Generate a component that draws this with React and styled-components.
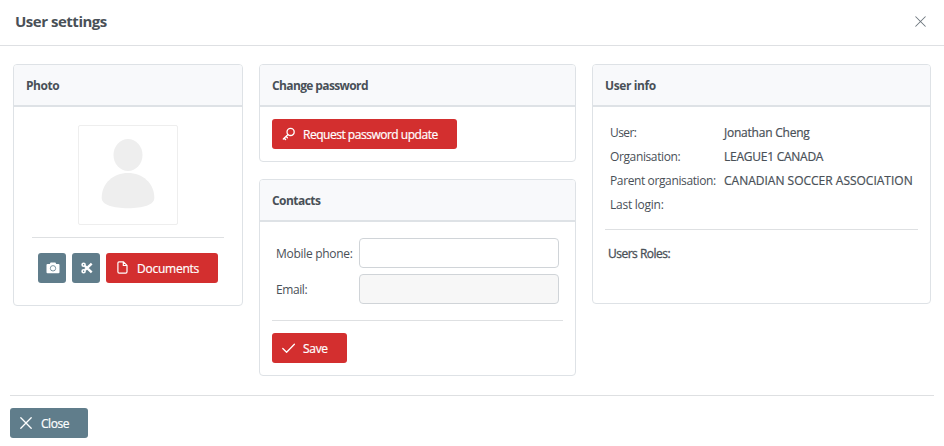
import React from "react";
import styled, { createGlobalStyle } from "styled-components";

const Global = createGlobalStyle`
  *, *::before, *::after { box-sizing: border-box; }
  body {
    margin: 0;
    background: #fff;
    color: #495057;
    font-family: "Open Sans", "Noto Sans", sans-serif;
    font-size: 12px;
    line-height: 17px;
    overflow: hidden;
  }
`;

const Dialog = styled.div`
  width: 944px;
  height: 446px;
  display: flex;
  flex-direction: column;
  background: #fff;
`;

const TitleBar = styled.header`
  height: 46px;
  flex: none;
  display: flex;
  align-items: center;
  justify-content: space-between;
  padding: 0 18px 3px 15px;
  border-bottom: 1px solid #dee0e3;
`;

const Title = styled.h1`
  margin: 0;
  font-size: 15px;
  line-height: 20px;
  font-weight: 700;
  letter-spacing: -0.48px;
`;

const IconButton = styled.button`
  display: flex;
  padding: 0;
  border: 0;
  background: none;
  color: #6c757d;
`;

const Columns = styled.main`
  flex: none;
  height: 349px;
  padding: 18px 13px 0;
  display: grid;
  grid-template-columns: 230px 317px 339px;
  column-gap: 16px;
  align-items: start;
`;

const Stack = styled.div`
  display: grid;
  row-gap: 17px;
`;

const Card = styled.section`
  height: ${(p) => p.$height}px;
  border: 1px solid #dee2e6;
  border-radius: 4px;
  overflow: hidden;
`;

const CardHead = styled.h2`
  margin: 0;
  height: 42px;
  padding: 0 12px;
  border-bottom: 2px solid #dee2e6;
  background: #f8f9fb;
  font-size: 12px;
  line-height: 42px;
  font-weight: 700;
  letter-spacing: ${(p) => p.$spacing || 0}px;
`;

const CardBody = styled.div`
  padding: ${(p) => p.$pad || "12px"};
`;

const Rule = styled.hr`
  height: 1px;
  margin: ${(p) => p.$margin};
  border: 0;
  background: #dee0e2;
`;

const Avatar = styled.div`
  width: 100px;
  height: 100px;
  margin: 0 auto;
  border: 1px solid #eee;
  border-radius: 2px;
`;

const Actions = styled.div`
  display: flex;
  justify-content: center;
  gap: 6px;
`;

const Button = styled.button`
  width: ${(p) => p.$width}px;
  height: 30px;
  padding: 1px 0 0 ${(p) => p.$inset ?? 10}px;
  display: flex;
  align-items: center;
  border: 0;
  border-radius: 3px;
  background: ${(p) => (p.$slate ? "#607d8b" : "#d32f2f")};
  color: #fff;
  font: inherit;
  white-space: nowrap;

  svg { flex: none; margin-top: -2px; }
`;

const ButtonText = styled.span`
  margin-left: ${(p) => p.$gap ?? 7}px;
  letter-spacing: ${(p) => p.$spacing || 0}px;
  -webkit-text-stroke: 0.2px;
`;

const Field = styled.label`
  display: grid;
  grid-template-columns: 83px 200px;
  align-items: center;
  height: 30px;
  margin: 0 0 6px 4px;
`;

const Label = styled.span`
  padding-top: 1px;
  letter-spacing: ${(p) => p.$spacing || 0}px;
  white-space: nowrap;
`;

const Input = styled.input`
  height: 30px;
  width: 200px;
  border: 1px solid #d0d4d8;
  border-radius: 4px;
  background: #fff;

  &:disabled { background: #f7f7f7; }
`;

const InfoList = styled.dl`
  margin: 0;
  padding-left: 5px;
  display: grid;
  grid-template-columns: 114px 1fr;
  grid-auto-rows: 24px;
  line-height: 24px;
  white-space: nowrap;
`;

const Term = styled.dt`
  letter-spacing: ${(p) => p.$spacing || 0}px;
`;

const Detail = styled.dd`
  margin: 0;
  letter-spacing: ${(p) => p.$spacing || 0}px;
  -webkit-text-stroke: 0.2px;
`;

const Roles = styled.p`
  margin: 0 0 0 3px;
  letter-spacing: -0.5px;
  -webkit-text-stroke: 0.3px;
`;

const Footer = styled.footer`
  margin: 0 10px;
  padding-top: 12px;
  border-top: 1px solid #dee0e2;
`;

const Cross = ({ size, weight = 1.3 }) => (
  <svg width={size} height={size} viewBox="0 0 12 12" fill="none" stroke="currentColor" strokeWidth={weight} strokeLinecap="round">
    <path d="M.8.8 11.200 11.200M11.200.8.8 11.200" />
  </svg>
);

const Person = () => (
  <svg width="98" height="98" viewBox="0 0 98 98" fill="#eee">
    <ellipse cx="49" cy="29" rx="14.500" ry="16" />
    <path d="M49 47c14.500 0 26.300 10 26.300 25 0 7-11.500 10.200-26.300 10.200S22.700 79 22.700 72C22.700 57 34.500 47 49 47Z" />
  </svg>
);

const Camera = () => (
  <svg width="14" height="12" viewBox="0 0 14 12">
    <path d="M1.500 2h2.300L4.600.600h4.800l.8 1.400h2.300q1 0 1 1v7.300q0 1-1 1h-11q-1 0-1-1V3q0-1 1-1Z" fill="#fff" />
    <circle cx="7" cy="6.300" r="2.700" fill="none" stroke="#607d8b" strokeWidth=".8" />
  </svg>
);

const Scissors = () => (
  <svg width="12" height="12" viewBox="0 0 12 12" fill="none" stroke="#fff">
    <circle cx="2.600" cy="2.700" r="1.500" strokeWidth="1.600" />
    <circle cx="2.600" cy="9.300" r="1.500" strokeWidth="1.600" />
    <path d="M3.800 3.900 10.700 10.300M3.800 8.100 10.700 1.700" strokeWidth="2.400" />
  </svg>
);

const FileIcon = () => (
  <svg width="11" height="13" viewBox="0 0 11 13" fill="none" stroke="#fff" strokeWidth="1.200" strokeLinejoin="round">
    <path d="M2 .8h4.500L10 4.300v6.500q0 1.300-1.300 1.300H2.200Q.9 12.100.9 10.800V2Q.9.800 2 .8ZM6.300.9v3.600h3.600" />
  </svg>
);

const KeyIcon = () => (
  <svg width="14" height="14" viewBox="0 0 14 14" fill="none" stroke="#fff" strokeWidth="1.300" strokeLinecap="round">
    <circle cx="8.600" cy="4.900" r="3.600" />
    <path d="M6 7.500 1.300 12M2.300 11.200l1.300 1.300M4.200 9.500l1.200 1.200" />
  </svg>
);

const Check = () => (
  <svg width="14" height="12" viewBox="0 0 14 12" fill="none" stroke="#fff" strokeWidth="1.300" strokeLinecap="round" strokeLinejoin="round">
    <path d="M.8 6.500 4.600 10.200 12.400 2.200" />
  </svg>
);

export default function App() {
  return (
    <>
      <Global />
      <Dialog>
        <TitleBar>
          <Title>User settings</Title>
          <IconButton aria-label="Close dialog"><Cross size={11} weight={1.1} /></IconButton>
        </TitleBar>
        <Columns>
          <Card $height={242}>
            <CardHead $spacing={-0.45}>Photo</CardHead>
            <CardBody $pad="18px 18px 0">
              <Avatar><Person /></Avatar>
              <Rule $margin="12px 0 15px" />
              <Actions>
                <Button $slate $width={28} $inset={8} aria-label="Take photo"><Camera /></Button>
                <Button $slate $width={28} $inset={9} aria-label="Crop photo"><Scissors /></Button>
                <Button $width={112} $inset={11}><FileIcon /><ButtonText $gap={9} $spacing={-0.25}>Documents</ButtonText></Button>
              </Actions>
            </CardBody>
          </Card>
          <Stack>
            <Card $height={98}>
              <CardHead $spacing={-0.62}>Change password</CardHead>
              <CardBody>
                <Button $width={185}><KeyIcon /><ButtonText $spacing={-0.48}>Request password update</ButtonText></Button>
              </CardBody>
            </Card>
            <Card $height={197}>
              <CardHead $spacing={-0.55}>Contacts</CardHead>
              <CardBody $pad="16px 12px 0">
                <Field><Label $spacing={-0.3}>Mobile phone:</Label><Input /></Field>
                <Field><Label $spacing={-0.4}>Email:</Label><Input disabled /></Field>
                <Rule $margin="16px 0 12px" />
                <Button $width={75}><Check /><ButtonText $spacing={-0.3}>Save</ButtonText></Button>
              </CardBody>
            </Card>
          </Stack>
          <Card $height={240}>
            <CardHead $spacing={-0.4}>User info</CardHead>
            <CardBody $pad="14px 12px 0">
              <InfoList>
                <Term $spacing={-0.6}>User:</Term><Detail $spacing={-0.23}>Jonathan Cheng</Detail>
                <Term $spacing={-0.38}>Organisation:</Term><Detail $spacing={-0.25}>LEAGUE1 CANADA</Detail>
                <Term $spacing={-0.38}>Parent organisation:</Term><Detail>CANADIAN SOCCER ASSOCIATION</Detail>
                <Term $spacing={-0.25}>Last login:</Term><Detail />
              </InfoList>
              <Rule $margin="12px 0 15px" />
              <Roles>Users Roles:</Roles>
            </CardBody>
          </Card>
        </Columns>
        <Footer>
          <Button $slate $width={78}><Cross size={12} /><ButtonText $gap={9} $spacing={-0.45}>Close</ButtonText></Button>
        </Footer>
      </Dialog>
    </>
  );
}
